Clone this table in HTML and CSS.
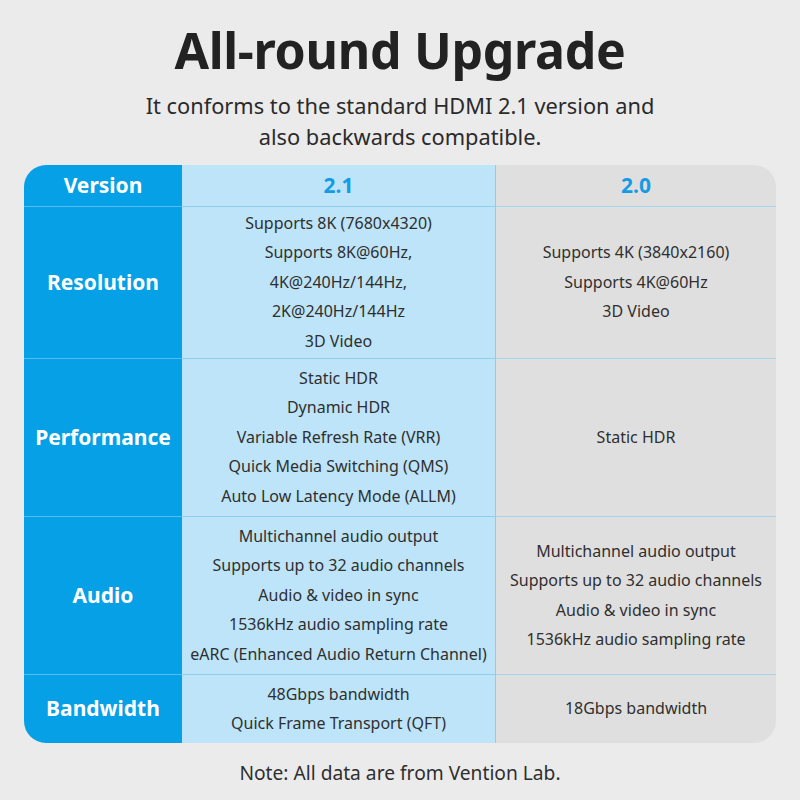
FILE: index.html
```html
<!DOCTYPE html>
<html>
<head>
<meta charset="utf-8">
<link rel="stylesheet" href="styles.css">
</head>
<body>
<div class="page">
  <h1 class="title">All-round Upgrade</h1>
  <p class="subtitle">It conforms to the standard HDMI 2.1 version and<br>also backwards compatible.</p>
  <div class="table">
    <div class="cell key head">Version</div>
    <div class="cell v21 head ver">2.1</div>
    <div class="cell v20 head ver">2.0</div>

    <div class="cell key">Resolution</div>
    <div class="cell v21"><span>Supports 8K (7680x4320)</span><span>Supports 8K@60Hz,</span><span>4K@240Hz/144Hz,</span><span>2K@240Hz/144Hz</span><span>3D Video</span></div>
    <div class="cell v20"><span>Supports 4K (3840x2160)</span><span>Supports 4K@60Hz</span><span>3D Video</span></div>

    <div class="cell key">Performance</div>
    <div class="cell v21"><span>Static HDR</span><span>Dynamic HDR</span><span>Variable Refresh Rate (VRR)</span><span>Quick Media Switching (QMS)</span><span>Auto Low Latency Mode (ALLM)</span></div>
    <div class="cell v20"><span>Static HDR</span></div>

    <div class="cell key">Audio</div>
    <div class="cell v21"><span>Multichannel audio output</span><span>Supports up to 32 audio channels</span><span>Audio &amp; video in sync</span><span>1536kHz audio sampling rate</span><span>eARC (Enhanced Audio Return Channel)</span></div>
    <div class="cell v20"><span>Multichannel audio output</span><span>Supports up to 32 audio channels</span><span>Audio &amp; video in sync</span><span>1536kHz audio sampling rate</span></div>

    <div class="cell key last">Bandwidth</div>
    <div class="cell v21 last"><span>48Gbps bandwidth</span><span>Quick Frame Transport (QFT)</span></div>
    <div class="cell v20 last"><span>18Gbps bandwidth</span></div>
  </div>
  <p class="note">Note: All data are from Vention Lab.</p>
</div>
</body>
</html>
```

FILE: styles.css
```css
html, body {
  margin: 0;
  padding: 0;
  background: #ebebeb;
}
.page {
  width: 800px;
  height: 800px;
  display: flex;
  flex-direction: column;
  align-items: center;
  font-family: "Noto Sans", "Open Sans", sans-serif;
  color: #2a2a2a;
}
.title {
  margin: 20px 0 0;
  font-size: 50px;
  line-height: 60px;
  font-weight: 700;
  color: #222;
  letter-spacing: -0.3px;
}
.subtitle {
  margin: 10px 0 0;
  font-size: 21.8px;
  line-height: 31px;
  text-align: center;
  color: #2a2a2a;
}
.table {
  margin-top: 13px;
  width: 752px;
  display: grid;
  grid-template-columns: 158px 314px 280px;
  grid-template-rows: 42px 152px 158px 158px 68px;
  border-radius: 22px;
  overflow: hidden;
}
.cell {
  display: flex;
  flex-direction: column;
  align-items: center;
  justify-content: center;
  font-size: 16px;
  line-height: 29.5px;
  color: #2f2f2f;
  text-align: center;
  border-bottom: 1px solid #8ccdf0;
  box-sizing: border-box;
}
.cell.last {
  border-bottom: none;
}
.key {
  background: #06a0e6;
  color: #fff;
  font-size: 21px;
  font-weight: 700;
  border-bottom-color: #55bdf0;
}
.v21 {
  background: #bde4f8;
  border-right: 1px solid #8ccdf0;
}
.v20 {
  background: #e0dfdf;
  border-bottom-color: #a6d3ee;
}
.head {
  font-size: 21px;
  font-weight: 700;
}
.ver {
  color: #139ce4;
}
.note {
  margin: 16px 0 0;
  font-size: 19.2px;
  line-height: 28px;
  color: #2f2f2f;
}
```
